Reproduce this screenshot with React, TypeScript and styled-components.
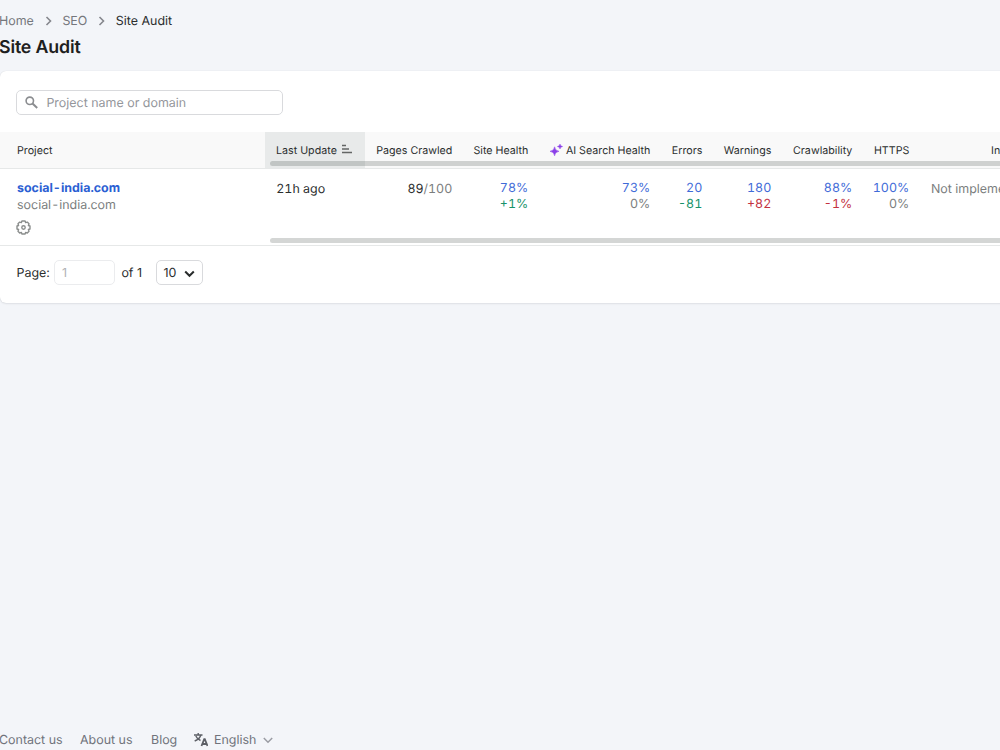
import React from "react";
import styled, { createGlobalStyle } from "styled-components";

const Global = createGlobalStyle`
  * { box-sizing: border-box; }
  html, body { margin: 0; padding: 0; background: #f3f5f9; overflow: hidden; }
  body { font-family: Inter, "Liberation Sans", sans-serif; font-size: 12.44px; color: #2b2e2e; text-rendering: geometricPrecision; }
`;

const Page = styled.div`
  width: 1000px;
  height: 750px;
  display: flex;
  flex-direction: column;
  overflow: hidden;
`;

const Breadcrumbs = styled.nav`
  display: flex;
  align-items: center;
  height: 20px;
  margin: 11px 0 0 -1px;
  svg { flex: none; }
`;

const Crumb = styled.span<{ $w: number; $current?: boolean }>`
  width: ${(p) => p.$w}px;
  white-space: nowrap;
  color: ${(p) => (p.$current ? "#2b2e2e" : "#75777c")};
`;

const Separator = styled.svg`
  width: 8px;
  height: 10px;
  margin: 0 9.4px 0 11px;
`;

const Title = styled.h1`
  margin: 5px 0 0 -1px;
  height: 24px;
  line-height: 24px;
  font-size: 17.78px;
  font-weight: 600;
  letter-spacing: -0.15px;
  color: #1d2020;
`;

const Card = styled.section`
  width: 1010px;
  height: 232px;
  margin-top: 11px;
  background: #fff;
  border-radius: 6px;
  box-shadow: 0 0 1px rgba(25, 27, 35, 0.16), 0 1px 2px rgba(25, 27, 35, 0.08);
  overflow: hidden;
  flex: none;
`;

const Search = styled.div`
  display: flex;
  align-items: center;
  width: 267px;
  height: 25px;
  margin: 19px 0 17px 16.4px;
  padding-left: 8px;
  border: 1px solid #d9dadd;
  border-radius: 5px;
  color: #94969b;
  svg { margin-right: 8px; }
`;

const SearchText = styled.span`
  padding-top: 2px;
`;

const Row = styled.div<{ $head?: boolean }>`
  position: relative;
  display: grid;
  grid-template-columns: 265px 100px 98px 76px 122px 52px 69px 81px 57px 90px;
  height: ${(p) => (p.$head ? 37 : 77)}px;
  background: ${(p) => (p.$head ? "#f9f9f9" : "#fff")};
  border-bottom: 1px solid #e6e8e8;
  font-variant-numeric: tabular-nums;
`;

const HeadCell = styled.div<{ $left?: boolean; $sorted?: boolean; $pad?: number }>`
  display: flex;
  justify-content: ${(p) => (p.$left ? "flex-start" : "flex-end")};
  padding: 11px 10.6px 0 ${(p) => p.$pad ?? 0}px;
  height: 36px;
  line-height: 16px;
  font-size: 10.67px;
  letter-spacing: 0.03px;
  white-space: nowrap;
  background: ${(p) => (p.$sorted ? "#e8eaea" : "transparent")};
  svg { flex: none; }
`;

const Cell = styled.div<{ $pad?: number; $left?: boolean; $top?: number }>`
  display: flex;
  flex-direction: column;
  align-items: ${(p) => (p.$left ? "flex-start" : "flex-end")};
  padding: ${(p) => p.$top ?? 12}px 10.8px 0 ${(p) => p.$pad ?? 0}px;
  line-height: 16px;
  white-space: nowrap;
`;

const Scrollbar = styled.div`
  position: absolute;
  left: 270px;
  right: 0;
  bottom: 2px;
  height: 5px;
  border-radius: 3px 0 0 3px;
  background: rgba(25, 35, 32, 0.19);
`;

const tones = {
  link: "#3f6bd8",
  up: "#17926a",
  down: "#c3313f",
  muted: "#7b7e7e",
};

const Figure = styled.span<{ $tone: keyof typeof tones }>`
  color: ${(p) => tones[p.$tone]};
`;

const ProjectName = styled.a`
  color: #2b5fd3;
  font-weight: 700;
  line-height: 17px;
`;

const Domain = styled.span`
  color: #7b7e7e;
  line-height: 17px;
`;

const Gear = styled.svg`
  width: 15px;
  height: 15px;
  margin: 6px 0 0 -0.7px;
`;

const Plain = styled.span<{ $muted?: boolean }>`
  padding-top: 1px;
  margin-top: -0.5px;
  color: ${(p) => (p.$muted ? "#7b7e7e" : "#2b2e2e")};
`;

const Slash = styled.span`
  color: #7b7e7e;
`;

const Pagination = styled.div`
  display: flex;
  align-items: center;
  height: 25px;
  margin: 14px 0 0 16.5px;
`;

const PageLabel = styled.span`
  padding-top: 2px;
`;

const PageField = styled.span`
  display: flex;
  align-items: center;
  width: 61px;
  height: 25px;
  margin: 0 6.5px 0 4px;
  padding: 2px 0 0 7px;
  border: 1px solid #ebecee;
  border-radius: 5px;
  color: #b0b2b5;
`;

const PageSize = styled.span`
  display: flex;
  align-items: center;
  justify-content: space-between;
  width: 47px;
  height: 25px;
  margin-left: 13.5px;
  padding: 0 7px;
  border: 1px solid #d9dadd;
  border-radius: 5px;
  svg { margin-top: 2px; }
`;

const Footer = styled.footer`
  display: flex;
  align-items: center;
  height: 20px;
  margin: auto 0 0 -1px;
  color: #70737b;
  white-space: nowrap;
`;

const FooterLink = styled.span<{ $w: number }>`
  width: ${(p) => p.$w}px;
`;

const Chevron = () => (
  <Separator viewBox="0 0 8 10" fill="none" stroke="#85878d" strokeWidth="1.6">
    <path d="M1.5 1l4 4-4 4" />
  </Separator>
);

const SortIcon = styled.svg`
  margin: 1px 0 0 4px;
`;

const SparkIcon = styled.svg`
  margin: 1px 3px 0 0;
`;

const LanguageIcon = styled.svg`
  margin-right: 6px;
`;

type Tone = keyof typeof tones;
const metrics: [string, string, Tone][] = [
  ["78%", "+1%", "up"],
  ["73%", "0%", "muted"],
  ["20", "-81", "up"],
  ["180", "+82", "down"],
  ["88%", "-1%", "down"],
  ["100%", "0%", "muted"],
];

export default function App() {
  return (
    <Page>
      <Global />
      <Breadcrumbs>
        <Crumb $w={35}>Home</Crumb>
        <Chevron />
        <Crumb $w={25}>SEO</Crumb>
        <Chevron />
        <Crumb $w={60} $current>Site Audit</Crumb>
      </Breadcrumbs>
      <Title>Site Audit</Title>
      <Card>
        <Search>
          <svg width="13" height="13" viewBox="0 0 13 13" fill="none" stroke="#8b8d90" strokeWidth="1.6">
            <circle cx="4.8" cy="4.8" r="3.7" />
            <path d="M7.5 7.5l4.7 4.5" strokeWidth="2" />
          </svg>
          <SearchText>Project name or domain</SearchText>
        </Search>
        <Row $head>
          <HeadCell $left $pad={17}>Project</HeadCell>
          <HeadCell $left $sorted $pad={11}>
            Last Update
            <SortIcon width="12" height="11" viewBox="0 0 12 11" fill="none" stroke="#636665" strokeWidth="1.4">
              <path d="M1 1.5h4M1 5h7M1 8.5h10" />
            </SortIcon>
          </HeadCell>
          <HeadCell>Pages Crawled</HeadCell>
          <HeadCell>Site Health</HeadCell>
          <HeadCell>
            <SparkIcon width="13" height="13" viewBox="0 0 13 13" fill="#8b3fe8">
              <path d="M4.6 2.8Q5 6.8 9 7.3Q5 7.8 4.6 11.8Q4.2 7.8 0 7.3Q4.2 6.8 4.6 2.8Z" stroke="#8b3fe8" strokeWidth=".5" />
              <path d="M10 0Q10.3 2.2 12.7 2.5Q10.3 2.8 10 5Q9.7 2.8 7.3 2.5Q9.7 2.2 10 0Z" stroke="#8b3fe8" strokeWidth=".4" />
            </SparkIcon>
            AI Search Health
          </HeadCell>
          <HeadCell>Errors</HeadCell>
          <HeadCell>Warnings</HeadCell>
          <HeadCell>Crawlability</HeadCell>
          <HeadCell>HTTPS</HeadCell>
          <HeadCell $left $pad={71}>In</HeadCell>
          <Scrollbar />
        </Row>
        <Row>
          <Cell $left $pad={17} $top={11}>
            <ProjectName>social-india.com</ProjectName>
            <Domain>social-india.com</Domain>
            <Gear viewBox="0 0 15 15" fill="none" stroke="#8b8e8d" strokeWidth="1.4" strokeLinejoin="round">
              <path d="M5.9 1h3.2l.5 1.6 1.7-.5 1.7 1.7-.6 1.7 1.6.5v3l-1.6.5.6 1.7-1.7 1.8-1.7-.6-.5 1.6H5.9l-.5-1.6-1.7.6L2 11.2l.6-1.7L1 9V6l1.6-.5L2 3.8l1.7-1.7 1.7.5z" />
              <circle cx="7.5" cy="7.5" r="1.7" />
            </Gear>
          </Cell>
          <Cell $left $pad={11.3}><Plain>21h ago</Plain></Cell>
          <Cell><Plain>89<Slash>/100</Slash></Plain></Cell>
          {metrics.map(([value, delta, tone], i) => (
            <Cell key={i}>
              <Figure $tone="link">{value}</Figure>
              <Figure $tone={tone}>{delta}</Figure>
            </Cell>
          ))}
          <Cell $left $pad={11}><Plain $muted>Not implemented</Plain></Cell>
          <Scrollbar />
        </Row>
        <Pagination>
          <PageLabel>Page:</PageLabel>
          <PageField>1</PageField>
          <PageLabel>of 1</PageLabel>
          <PageSize>
            <PageLabel>10</PageLabel>
            <svg width="11" height="8" viewBox="0 0 11 8" fill="none" stroke="#2b2e2e" strokeWidth="2">
              <path d="M1.2 1.5l4.3 4.3 4.3-4.3" />
            </svg>
          </PageSize>
        </Pagination>
      </Card>
      <Footer>
        <FooterLink $w={81}>Contact us</FooterLink>
        <FooterLink $w={71}>About us</FooterLink>
        <FooterLink $w={43}>Blog</FooterLink>
        <LanguageIcon width="14" height="14" viewBox="0 0 14 14" fill="none" stroke="#5c5f66" strokeWidth="1.4">
          <path d="M0 2h8.5M4.2 0v2M6.8 2.2C6 5 3.5 6.8.7 8M1.8 3C2.8 5.3 4.5 6.7 6.5 7.5" />
          <path d="M7.5 13L10.2 6.2h.6l2.7 6.8M8.2 11h4.5" strokeWidth="1.8" />
        </LanguageIcon>
        <FooterLink $w={49}>English</FooterLink>
        <svg width="10" height="7" viewBox="0 0 10 7" fill="none" stroke="#9a9ca3" strokeWidth="1.5">
          <path d="M.8 1l4.2 4.2L9.2 1" />
        </svg>
      </Footer>
    </Page>
  );
}
